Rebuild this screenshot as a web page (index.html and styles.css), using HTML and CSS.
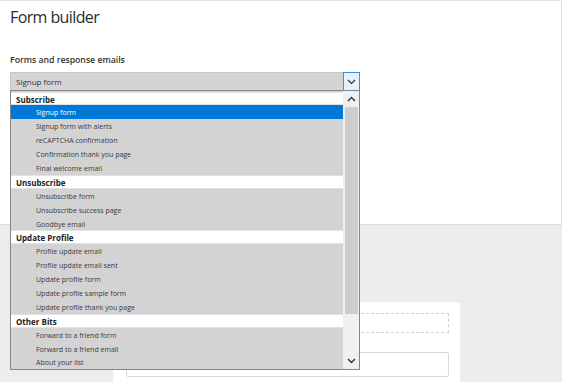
FILE: index.html
```html
<!DOCTYPE html>
<html>
<head>
<meta charset="utf-8">
<link rel="stylesheet" href="styles.css">
</head>
<body>
<div class="panel">
  <h1 class="title">Form builder</h1>
  <div class="label">Forms and response emails</div>
  <div class="select-wrap">
    <div class="select">
      <span class="select-value">Signup form</span>
      <span class="select-btn">
        <svg width="9" height="6" viewBox="0 0 9 6"><path d="M1 1l3.5 3.5L8 1" fill="none" stroke="#333" stroke-width="1.2"/></svg>
      </span>
    </div>
    <div class="listbox">
      <div class="options">
        <div class="group">Subscribe</div>
        <div class="opt selected">Signup form</div>
        <div class="opt">Signup form with alerts</div>
        <div class="opt">reCAPTCHA confirmation</div>
        <div class="opt">Confirmation thank you page</div>
        <div class="opt">Final welcome email</div>
        <div class="group">Unsubscribe</div>
        <div class="opt">Unsubscribe form</div>
        <div class="opt">Unsubscribe success page</div>
        <div class="opt">Goodbye email</div>
        <div class="group">Update Profile</div>
        <div class="opt">Profile update email</div>
        <div class="opt">Profile update email sent</div>
        <div class="opt">Update profile form</div>
        <div class="opt">Update profile sample form</div>
        <div class="opt">Update profile thank you page</div>
        <div class="group">Other Bits</div>
        <div class="opt">Forward to a friend form</div>
        <div class="opt">Forward to a friend email</div>
        <div class="opt">About your list</div>
      </div>
      <div class="scrollbar">
        <div class="sb-btn">
          <svg width="9" height="6" viewBox="0 0 9 6"><path d="M1 5l3.5-3.5L8 5" fill="none" stroke="#333" stroke-width="1.4"/></svg>
        </div>
        <div class="sb-thumb"></div>
        <div class="sb-track"></div>
        <div class="sb-btn">
          <svg width="9" height="6" viewBox="0 0 9 6"><path d="M1 1l3.5 3.5L8 1" fill="none" stroke="#333" stroke-width="1.4"/></svg>
        </div>
      </div>
    </div>
  </div>
</div>
<div class="lower">
  <div class="card">
    <div class="dashed"></div>
    <div class="input"></div>
  </div>
</div>
</body>
</html>
```

FILE: styles.css
```css
* { box-sizing: border-box; }
html, body { margin: 0; padding: 0; }
body {
  background: #ececec;
  font-family: "Open Sans", "DejaVu Sans", sans-serif;
  color: #333;
  width: 562px;
  height: 382px;
  overflow: hidden;
}
.panel {
  width: 562px;
  height: 225px;
  background: #fff;
  border-top: 1px solid #e4e4e4;
  border-right: 1px solid #dcdcdc;
  border-bottom: 1px solid #dcdcdc;
  padding: 5px 10px 0 10px;
}
.title {
  margin: 0;
  font-size: 16px;
  letter-spacing: -0.6px;
  font-weight: 400;
  line-height: 22px;
  color: #2b2b2b;
}
.label {
  margin-top: 26px;
  font-size: 8.7px;
  font-weight: 600;
  line-height: 12px;
  color: #333;
}
.select-wrap {
  position: relative;
  margin-top: 6px;
  width: 350px;
}
.select {
  display: flex;
  height: 19px;
  background: #d4d4d4;
  border: 1px solid #c6c6c6;
  border-right: none;
}
.select-value {
  flex: 1;
  font-size: 8px;
  line-height: 17px;
  padding-left: 5px;
  color: #333;
}
.select-btn {
  width: 17px;
  height: 19px;
  margin-top: -1px;
  background: #e5f1fb;
  border: 1px solid #3c8fdc;
  display: flex;
  align-items: center;
  justify-content: center;
}
.listbox {
  position: absolute;
  top: 18px;
  left: 0;
  width: 350px;
  height: 280px;
  border: 1px solid #858585;
  background: #d3d3d3;
  display: flex;
}
.options {
  flex: 1;
  display: flex;
  flex-direction: column;
  padding-top: 0.5px;
}
.group, .opt {
  height: 13.9px;
  line-height: 15px;
  white-space: nowrap;
}
.group {
  background: #fff;
  font-size: 8px;
  font-weight: 700;
  padding-left: 5px;
  color: #222;
  border-top: 1px solid #e2e2e2;
  border-bottom: 1px solid #e2e2e2;
  line-height: 13px;
}
.opt {
  font-size: 7px;
  padding-left: 25px;
  color: #3a3a3a;
}
.opt.selected {
  background: #0078d7;
  color: #fff;
}
.scrollbar {
  width: 16px;
  display: flex;
  flex-direction: column;
  background: #f0f0f0;
  border-left: 1px solid #f0f0f0;
}
.sb-btn {
  height: 16px;
  display: flex;
  align-items: center;
  justify-content: center;
  background: #f0f0f0;
}
.sb-thumb {
  height: 207px;
  background: #cdcdcd;
  margin: 0 1px;
}
.sb-track {
  flex: 1;
}
.lower {
  padding: 77px 0 0 113px;
}
.card {
  width: 347px;
  height: 90px;
  background: #fff;
  border-radius: 3px;
  padding: 11px 11px 0 13px;
}
.dashed {
  height: 20px;
  border: 1px dashed #cfcfcf;
  margin-left: 120px;
}
.input {
  margin-top: 19px;
  height: 25px;
  border: 1px solid #d8d8d8;
  border-radius: 2px;
}
```
